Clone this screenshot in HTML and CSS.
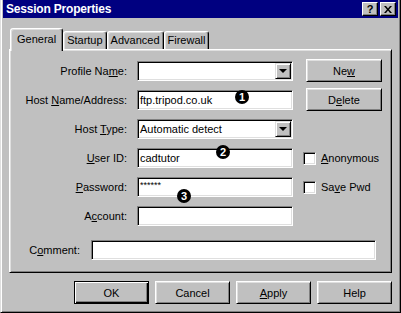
FILE: index.html
```html
<!DOCTYPE html>
<html lang="en">
<head>
  <meta charset="UTF-8" />
  <title>Session Properties</title>
  <link rel="stylesheet" href="styles.css">
</head>
<body>

  <div class="window">
    <!-- title bar -->
    <div class="titlebar">
      <span class="title">Session Properties</span>
      <div class="title-buttons">
        <span class="title-btn">?</span>
        <span class="title-btn">
          <svg width="8" height="7" viewBox="0 0 8 7">
            <path d="M0 0h2l2 2.5L6 0h2L5 3.5 8 7H6L4 4.5 2 7H0l3-3.5z" fill="#000"/>
          </svg>
        </span>
      </div>
    </div>

    <!-- tabs -->
    <div class="tabs">
      <div class="tab active">General</div>
      <div class="tab">Startup</div>
      <div class="tab">Advanced</div>
      <div class="tab">Firewall</div>
    </div>

    <div class="panel">
      <div class="form-grid">
        <label>Profile Na<u>m</u>e:</label>
        <div class="field combo"><span></span><span class="drop"></span></div>
        <button class="btn side">Ne<u>w</u></button>

        <label>Host <u>N</u>ame/Address:</label>
        <div class="field">ftp.tripod.co.uk</div>
        <button class="btn side">D<u>e</u>lete</button>

        <label>Host <u>T</u>ype:</label>
        <div class="field combo"><span>Automatic detect</span><span class="drop"></span></div>
        <div></div>

        <label><u>U</u>ser ID:</label>
        <div class="field">cadtutor</div>
        <div class="check"><span class="box"></span><span><u>A</u>nonymous</span></div>

        <label><u>P</u>assword:</label>
        <div class="field pwd">******</div>
        <div class="check"><span class="box"></span><span>Sa<u>v</u>e Pwd</span></div>

        <label>A<u>c</u>count:</label>
        <div class="field"></div>
        <div></div>
      </div>

      <div class="comment-row">
        <label>C<u>o</u>mment:</label>
        <div class="field comment"></div>
      </div>

      <!-- numbered callouts -->
      <span class="marker m1">1</span>
      <span class="marker m2">2</span>
      <span class="marker m3">3</span>
    </div>

    <div class="footer">
      <button class="btn default">OK</button>
      <button class="btn">Cancel</button>
      <button class="btn"><u>A</u>pply</button>
      <button class="btn">Help</button>
    </div>
  </div>

</body>
</html>
```

FILE: styles.css
```css
* {
  margin: 0;
  padding: 0;
  box-sizing: border-box;
}

body {
  width: 401px;
  height: 313px;
  overflow: hidden;
  background-color: #c0c0c0;
  font-family: "Liberation Sans", Arial, sans-serif;
  font-size: 11px;
  color: #000;
}

/* window frame */
.window {
  width: 401px;
  height: 313px;
  display: flex;
  flex-direction: column;
  padding: 0 2px 2px;
  border-left: 1px solid #dfdfdf;
  border-right: 1px solid #000;
  border-bottom: 1px solid #000;
  box-shadow: inset 1px 0 #fff, inset -1px -1px #808080;
}

.titlebar {
  height: 18px;
  display: flex;
  align-items: center;
  justify-content: space-between;
  padding: 0 2px 0 3px;
  background-color: #000080;
  color: #fff;
  font-size: 12px;
  font-weight: bold;
}

.title {
  letter-spacing: -0.2px;
}

.title-buttons {
  display: flex;
  gap: 2px;
}

.title-btn {
  width: 16px;
  height: 14px;
  display: flex;
  align-items: center;
  justify-content: center;
  background-color: #c0c0c0;
  color: #000;
  font-size: 11px;
  font-weight: bold;
  border: 1px solid;
  border-color: #fff #000 #000 #fff;
  box-shadow: inset -1px -1px #808080;
}

/* tabs */
.tabs {
  display: flex;
  align-items: flex-end;
  height: 21px;
  margin-top: 10px;
  padding-left: 7px;
  position: relative;
  z-index: 1;
}

.tab {
  height: 18px;
  padding: 0 3px;
  line-height: 16px;
  border: 1px solid;
  border-bottom: none;
  border-color: #fff #000 transparent #fff;
  border-radius: 3px 3px 0 0;
  box-shadow: inset -1px 0 #808080, inset 1px 1px #dfdfdf;
  background-color: #c0c0c0;
}

.tab.active {
  height: 23px;
  margin-bottom: -2px;
  padding: 2px 6px 0;
}

/* tab panel */
.panel {
  position: relative;
  width: 383px;
  height: 224px;
  margin-left: 6px;
  padding-top: 11px;
  border: 1px solid;
  border-color: #fff #000 #000 #fff;
  box-shadow: inset 1px 1px #dfdfdf, inset -1px -1px #808080;
}

.form-grid {
  display: grid;
  grid-template-columns: 117px 156px 88px;
  grid-template-rows: repeat(6, 20px);
  column-gap: 10px;
  row-gap: 9px;
}

.form-grid label {
  text-align: right;
  line-height: 20px;
}

.field {
  height: 20px;
  padding: 0 2px;
  line-height: 18px;
  background-color: #fff;
  border: 1px solid;
  border-color: #808080 #fff #fff #808080;
  box-shadow: inset 1px 1px #000, inset -1px -1px #dfdfdf;
  white-space: nowrap;
}

.field.pwd {
  font-size: 9px;
  line-height: 14px;
}

.combo {
  display: flex;
  justify-content: space-between;
  padding-right: 0;
}

.drop {
  position: relative;
  width: 16px;
  height: 16px;
  margin: 1px 1px 0 0;
  background-color: #c0c0c0;
  border: 1px solid;
  border-color: #dfdfdf #000 #000 #dfdfdf;
  box-shadow: inset 1px 1px #fff, inset -1px -1px #808080;
}

.drop::after {
  content: "";
  position: absolute;
  left: 3px;
  top: 5px;
  border-left: 4px solid transparent;
  border-right: 4px solid transparent;
  border-top: 4px solid #000;
}

/* buttons */
.btn {
  width: 75px;
  height: 23px;
  font-family: inherit;
  font-size: 11px;
  color: #000;
  background-color: #c0c0c0;
  border: 1px solid;
  border-color: #fff #000 #000 #fff;
  box-shadow: inset 1px 1px #dfdfdf, inset -1px -1px #808080;
}

.btn.side {
  width: 76px;
  align-self: start;
  margin: -2px 0 0 3px;
}

.btn.default {
  border-color: #000;
  box-shadow: inset 1px 1px #fff, inset -1px -1px #000, inset -2px -2px #808080;
}

/* checkboxes */
.check {
  display: flex;
  align-items: center;
  gap: 5px;
}

.check .box {
  width: 13px;
  height: 13px;
  background-color: #fff;
  border: 1px solid;
  border-color: #808080 #fff #fff #808080;
  box-shadow: inset 1px 1px #000, inset -1px -1px #dfdfdf;
}

.comment-row {
  display: flex;
  margin-top: 14px;
}

.comment-row label {
  width: 70px;
  margin-right: 11px;
  text-align: right;
  line-height: 20px;
}

.field.comment {
  width: 285px;
}

/* numbered callouts */
.marker {
  position: absolute;
  width: 14px;
  height: 14px;
  border-radius: 50%;
  background-color: #000;
  color: #fff;
  font-size: 11px;
  font-weight: bold;
  line-height: 14px;
  text-align: center;
}

.m1 { left: 225px; top: 40px; }
.m2 { left: 206px; top: 95px; }
.m3 { left: 167px; top: 139px; }

.footer {
  display: flex;
  justify-content: flex-end;
  gap: 6px;
  margin: 8px 6px 0 0;
}
```
